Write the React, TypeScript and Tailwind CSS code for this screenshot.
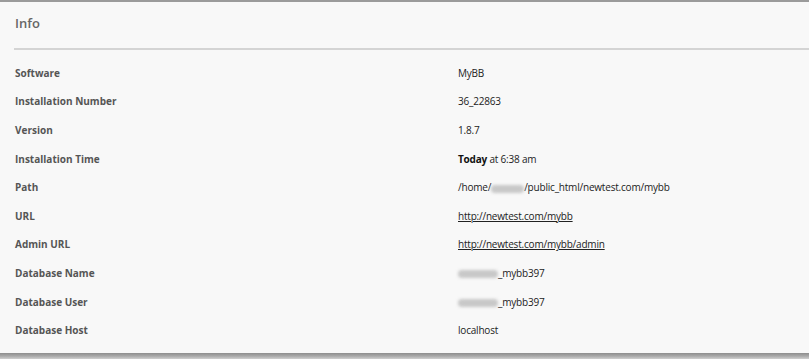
import React from "react"

const Blur = ({ w }: { w: number }) => (
    <span
        className="inline-block h-[8px] rounded-full bg-[#c8c8c8] blur-[1.5px] align-middle"
        style={{ width: w }}
    />
)

const rows: { label: string; value: React.ReactNode }[] = [
    { label: "Software", value: "MyBB" },
    { label: "Installation Number", value: "36_22863" },
    { label: "Version", value: "1.8.7" },
    {
        label: "Installation Time",
        value: (
            <>
                <b className="font-bold text-[#111]">Today</b> at 6:38 am
            </>
        ),
    },
    {
        label: "Path",
        value: (
            <>
                /home/<Blur w={33} />/public_html/newtest.com/mybb
            </>
        ),
    },
    { label: "URL", value: <span className="underline">http://newtest.com/mybb</span> },
    { label: "Admin URL", value: <span className="underline">http://newtest.com/mybb/admin</span> },
    {
        label: "Database Name",
        value: (
            <>
                <Blur w={40} />_mybb397
            </>
        ),
    },
    {
        label: "Database User",
        value: (
            <>
                <Blur w={40} />_mybb397
            </>
        ),
    },
    { label: "Database Host", value: "localhost" },
]

export default function App() {
    return (
        <div className="w-[809px] h-[359px] bg-white overflow-hidden" style={{ fontFamily: '"Open Sans", sans-serif' }}>
            <div className="bg-[#f8f8f8] border-t-2 border-[#9b9b9b] h-[353px]">
                <div className="h-[46px] pl-[15px] pt-[12px]">
                    <h2 className="text-[13px] font-semibold text-[#666]">Info</h2>
                </div>
                <div className="ml-[14px] border-b-2 border-[#d4d4d4]" />
                <div className="pt-[9px]">
                    {rows.map((r) => (
                        <div key={r.label} className="flex items-center h-[28.6px] pl-[15px] text-[10px]">
                            <div className="w-[443px] font-bold text-[#555]">{r.label}</div>
                            <div className="text-[#222] tracking-[-0.2px]">{r.value}</div>
                        </div>
                    ))}
                </div>
            </div>
            <div className="h-[6px] bg-gradient-to-b from-[#8e8e8e] via-[#a8a8a8] to-[#d0d0d0]" />
        </div>
    )
}
